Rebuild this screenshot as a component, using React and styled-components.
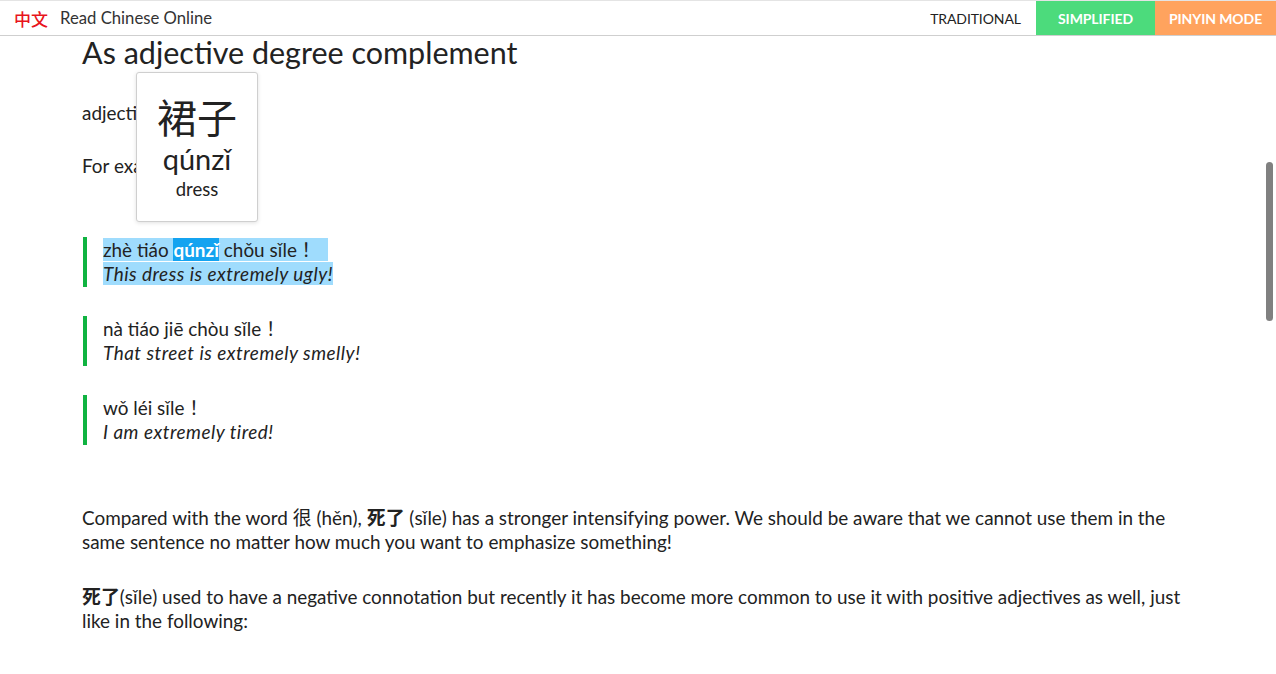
import styled, { createGlobalStyle } from 'styled-components';

const GlobalStyle = createGlobalStyle`
  html, body {
    margin: 0;
    padding: 0;
    height: 100%;
    overflow: hidden;
    background: #fff;
  }
  body {
    font-family: Lato, "Noto Sans CJK JP", sans-serif;
    color: #222;
  }
`;

const Header = styled.header`
  height: 36px;
  display: flex;
  align-items: stretch;
  border-bottom: 1px solid #cfcfcf;
  border-top: 1px solid #e4e4e4;
  box-sizing: border-box;
  background: #fff;
`;

const Brand = styled.div`
  display: flex;
  align-items: center;
  padding-left: 14px;
  flex: 1;
`;

const Logo = styled.span`
  color: #e8141b;
  font-family: "Noto Sans CJK SC", sans-serif;
  font-size: 17px;
  font-weight: 500;
  margin-right: 12px;
`;

const SiteName = styled.span`
  font-size: 16.7px;
  color: #333;
`;

const ModeButton = styled.div`
  display: flex;
  align-items: center;
  justify-content: center;
  width: ${({ $w }) => $w}px;
  background: ${({ $bg }) => $bg || 'transparent'};
  color: ${({ $bg }) => ($bg ? '#fff' : '#222')};
  font-size: 14px;
  font-weight: ${({ $bg }) => ($bg ? 700 : 400)};
  letter-spacing: -0.1px;
`;

const Main = styled.main`
  position: relative;
  padding: 0 82px;
  max-width: 1112px;
`;

const Title = styled.h2`
  margin: 0;
  font-size: 30.5px;
  font-weight: 400;
  line-height: 32px;
  color: #222;
`;

const Para = styled.p`
  margin: ${({ $mt }) => $mt || 0}px 0 0;
  font-size: 18.9px;
  line-height: 24px;
`;

const Quote = styled.blockquote`
  margin: ${({ $mt }) => $mt}px 0 0 1px;
  padding: 1px 0 1px 16px;
  border-left: 4px solid #10b341;
  font-size: 18.9px;
  line-height: 24px;
`;

const Pinyin = styled.div``;

const English = styled.div`
  font-style: italic;
  letter-spacing: 0.5px;
`;

const Selected = styled.span`
  background: #9fdcfd;
  padding-right: ${({ $pr }) => $pr || 0}px;
`;

const Focus = styled.span`
  background: #14a3f0;
  color: #fff;
  font-weight: 700;
`;

const Popup = styled.div`
  position: absolute;
  left: 136px;
  top: 36px;
  width: 122px;
  height: 150px;
  box-sizing: border-box;
  background: #fff;
  border: 1px solid #cfcfcf;
  border-radius: 3px;
  box-shadow: 0 1px 4px rgba(0, 0, 0, 0.12);
  display: flex;
  flex-direction: column;
  align-items: center;
  padding-top: 19px;
`;

const Hanzi = styled.div`
  font-family: "Noto Sans CJK SC", sans-serif;
  font-size: 40px;
  line-height: 48px;
  color: #222;
`;

const PopPinyin = styled.div`
  font-size: 29px;
  line-height: 34px;
  margin-top: 2px;
`;

const PopMeaning = styled.div`
  font-size: 18.5px;
  line-height: 24px;
  margin-top: 1px;
`;

const Han = styled.span`
  font-family: "Noto Sans CJK SC", sans-serif;
  font-weight: ${({ $b }) => ($b ? 700 : 400)};
`;

const ScrollThumb = styled.div`
  position: fixed;
  right: 3px;
  top: 162px;
  width: 7px;
  height: 159px;
  border-radius: 4px;
  background: #808080;
`;

const examples = [
  { pinyin: 'nà tiáo jiē chòu sǐle！', english: 'That street is extremely smelly!' },
  { pinyin: 'wǒ léi sǐle！', english: 'I am extremely tired!' },
];

export default function App() {
  return (
    <>
      <GlobalStyle />
      <Header>
        <Brand>
          <Logo>中文</Logo>
          <SiteName>Read Chinese Online</SiteName>
        </Brand>
        <ModeButton $w={121}>TRADITIONAL</ModeButton>
        <ModeButton $w={119} $bg="#4cdb7c">SIMPLIFIED</ModeButton>
        <ModeButton $w={121} $bg="#ffa35e">PINYIN MODE</ModeButton>
      </Header>
      <Main>
        <Title>As adjective degree complement</Title>
        <Para $mt={33}>adjective + 死了</Para>
        <Para $mt={29}>For example:</Para>
        <Quote $mt={59}>
          <Pinyin>
            <Selected $pr={12}>
              zhè tiáo <Focus>qúnzǐ</Focus> chǒu sǐle！
            </Selected>
          </Pinyin>
          <English>
            <Selected>This dress is extremely ugly!</Selected>
          </English>
        </Quote>
        {examples.map((ex) => (
          <Quote key={ex.pinyin} $mt={29}>
            <Pinyin>{ex.pinyin}</Pinyin>
            <English>{ex.english}</English>
          </Quote>
        ))}
        <Para $mt={60}>
          Compared with the word <Han>很</Han> (hěn), <Han $b>死了</Han> (sǐle) has a stronger
          intensifying power. We should be aware that we cannot use them in the same sentence no
          matter how much you want to emphasize something!
        </Para>
        <Para $mt={30}>
          <Han $b>死了</Han>(sǐle) used to have a negative connotation but recently it has become
          more common to use it with positive adjectives as well, just like in the following:
        </Para>
        <Popup>
          <Hanzi>裙子</Hanzi>
          <PopPinyin>qúnzǐ</PopPinyin>
          <PopMeaning>dress</PopMeaning>
        </Popup>
      </Main>
      <ScrollThumb />
    </>
  );
}
